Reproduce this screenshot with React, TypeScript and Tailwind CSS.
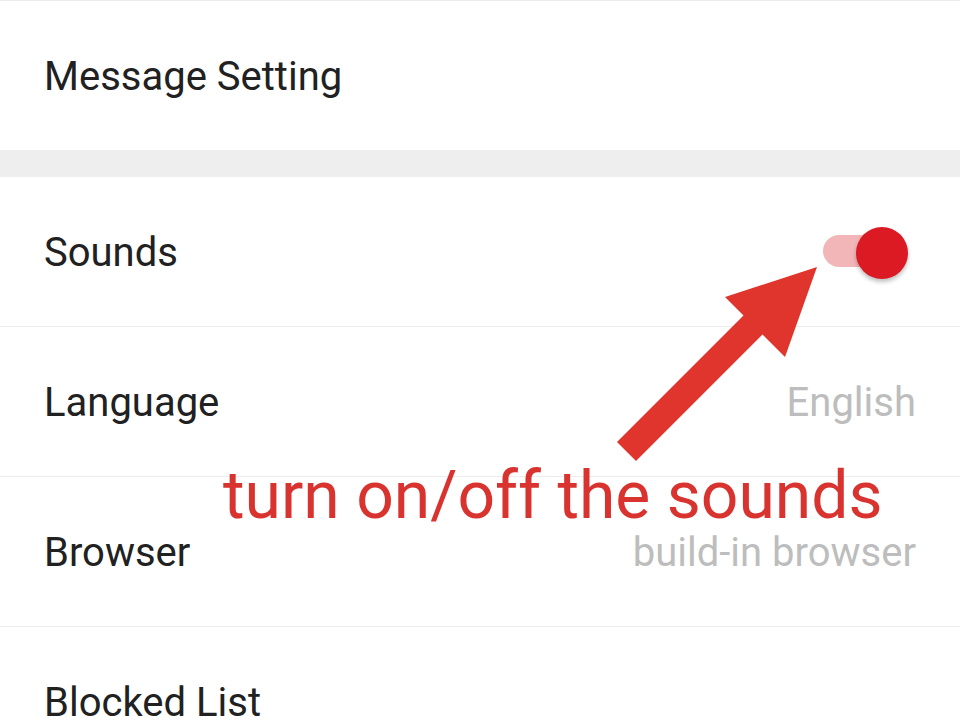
import React from 'react'

const font = { fontFamily: 'Roboto, "Noto Sans", sans-serif' }

function Row({ label, value, children, last }: { label: string; value?: string; children?: React.ReactNode; last?: boolean }) {
  return (
    <div className={`flex h-[150px] items-center justify-between pl-[44px] pr-[44px] pt-[2px] ${last ? '' : 'border-b border-[#ececec]'}`}>
      <span className="text-[40px] leading-[46px] text-[#212121]">{label}</span>
      {value && <span className="text-[40px] leading-[46px] text-[#bdbdbd]">{value}</span>}
      {children}
    </div>
  )
}

function Toggle() {
  return (
    <div className="relative mr-[8px] h-[52px] w-[85px]">
      <div className="absolute left-0 top-[8px] h-[32px] w-[76px] rounded-full bg-[#f3b6b8]" />
      <div className="absolute right-0 top-0 h-[52px] w-[52px] rounded-full bg-[#db1a24] shadow-[0_3px_4px_rgba(0,0,0,0.25)]" />
    </div>
  )
}

export default function App() {
  return (
    <main className="relative h-[725px] w-[960px] overflow-hidden bg-white" style={font}>
      <div className="h-[1px] bg-[#ececec]" />
      <div className="flex h-[149px] items-center pl-[44px] pt-[2px]">
        <span className="text-[40px] leading-[46px] text-[#212121]">Message Setting</span>
      </div>
      <div className="h-[27px] bg-[#eeeeee]" />
      <Row label="Sounds">
        <Toggle />
      </Row>
      <Row label="Language" value="English" />
      <Row label="Browser" value="build-in browser" />
      <Row label="Blocked List" last />

      <svg className="pointer-events-none absolute left-0 top-0" width="960" height="725">
        <polygon
          points="817,267 785,357 762.5,334.5 636,461 617,442 743.5,315.5 725,297"
          fill="#e0352d"
        />
      </svg>
      <div className="pointer-events-none absolute left-[223px] top-[465px] text-[66px] leading-[62px] text-[#d93330]">
        turn on/off the sounds
      </div>
    </main>
  )
}
